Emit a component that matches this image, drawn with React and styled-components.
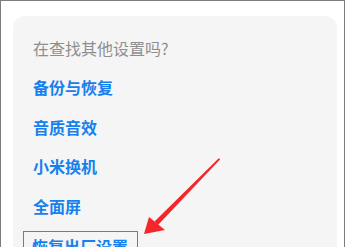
import styled, { createGlobalStyle } from "styled-components";

const GlobalStyle = createGlobalStyle`
  html, body {
    margin: 0;
    padding: 0;
    background: #fff;
  }
  body {
    font-family: "Noto Sans CJK SC", "Noto Sans", sans-serif;
  }
`;

const Frame = styled.div`
  position: relative;
  box-sizing: border-box;
  width: 345px;
  height: 247px;
  overflow: hidden;
  border: 1px solid #7d7d7d;
  border-bottom: none;
  padding: 15px 7px 0 12px;
`;

const Card = styled.div`
  background: #f5f5f5;
  border-radius: 12px;
  padding: 20px 0 20px 20px;
  height: 300px;
`;

const Hint = styled.div`
  font-size: 16px;
  line-height: 24px;
  color: #8e8e8e;
  margin-bottom: 15px;
`;

const List = styled.ul`
  list-style: none;
  margin: 0;
  padding: 0;
`;

const Item = styled.li`
  height: 39.5px;
  line-height: 24px;
  font-size: 16px;
  font-weight: 700;
  color: #1580ee;
`;

const Label = styled.span`
  display: inline-block;
  ${({ $marked }) =>
    $marked &&
    `
    border: 1px solid #f0484b;
    margin: -2px 0 0 -10px;
    padding: 2px 9px 0 8px;
  `}
`;

const Arrow = styled.svg`
  position: absolute;
  left: 0;
  top: 0;
  pointer-events: none;
`;

const items = ["备份与恢复", "音质音效", "小米换机", "全面屏", "恢复出厂设置"];

export default function App() {
  return (
    <>
      <GlobalStyle />
      <Frame>
        <Card>
          <Hint>在查找其他设置吗?</Hint>
          <List>
            {items.map((name, i) => (
              <Item key={name}>
                <Label $marked={i === items.length - 1}>{name}</Label>
              </Item>
            ))}
          </List>
        </Card>
        <Arrow width="345" height="247" viewBox="0 0 345 247">
          <polygon points="218,157 219,158.5 157,224 153.5,220.5" fill="#f3262b" />
          <polygon points="143,233 148,216 164,229" fill="#f3262b" />
        </Arrow>
      </Frame>
    </>
  );
}
